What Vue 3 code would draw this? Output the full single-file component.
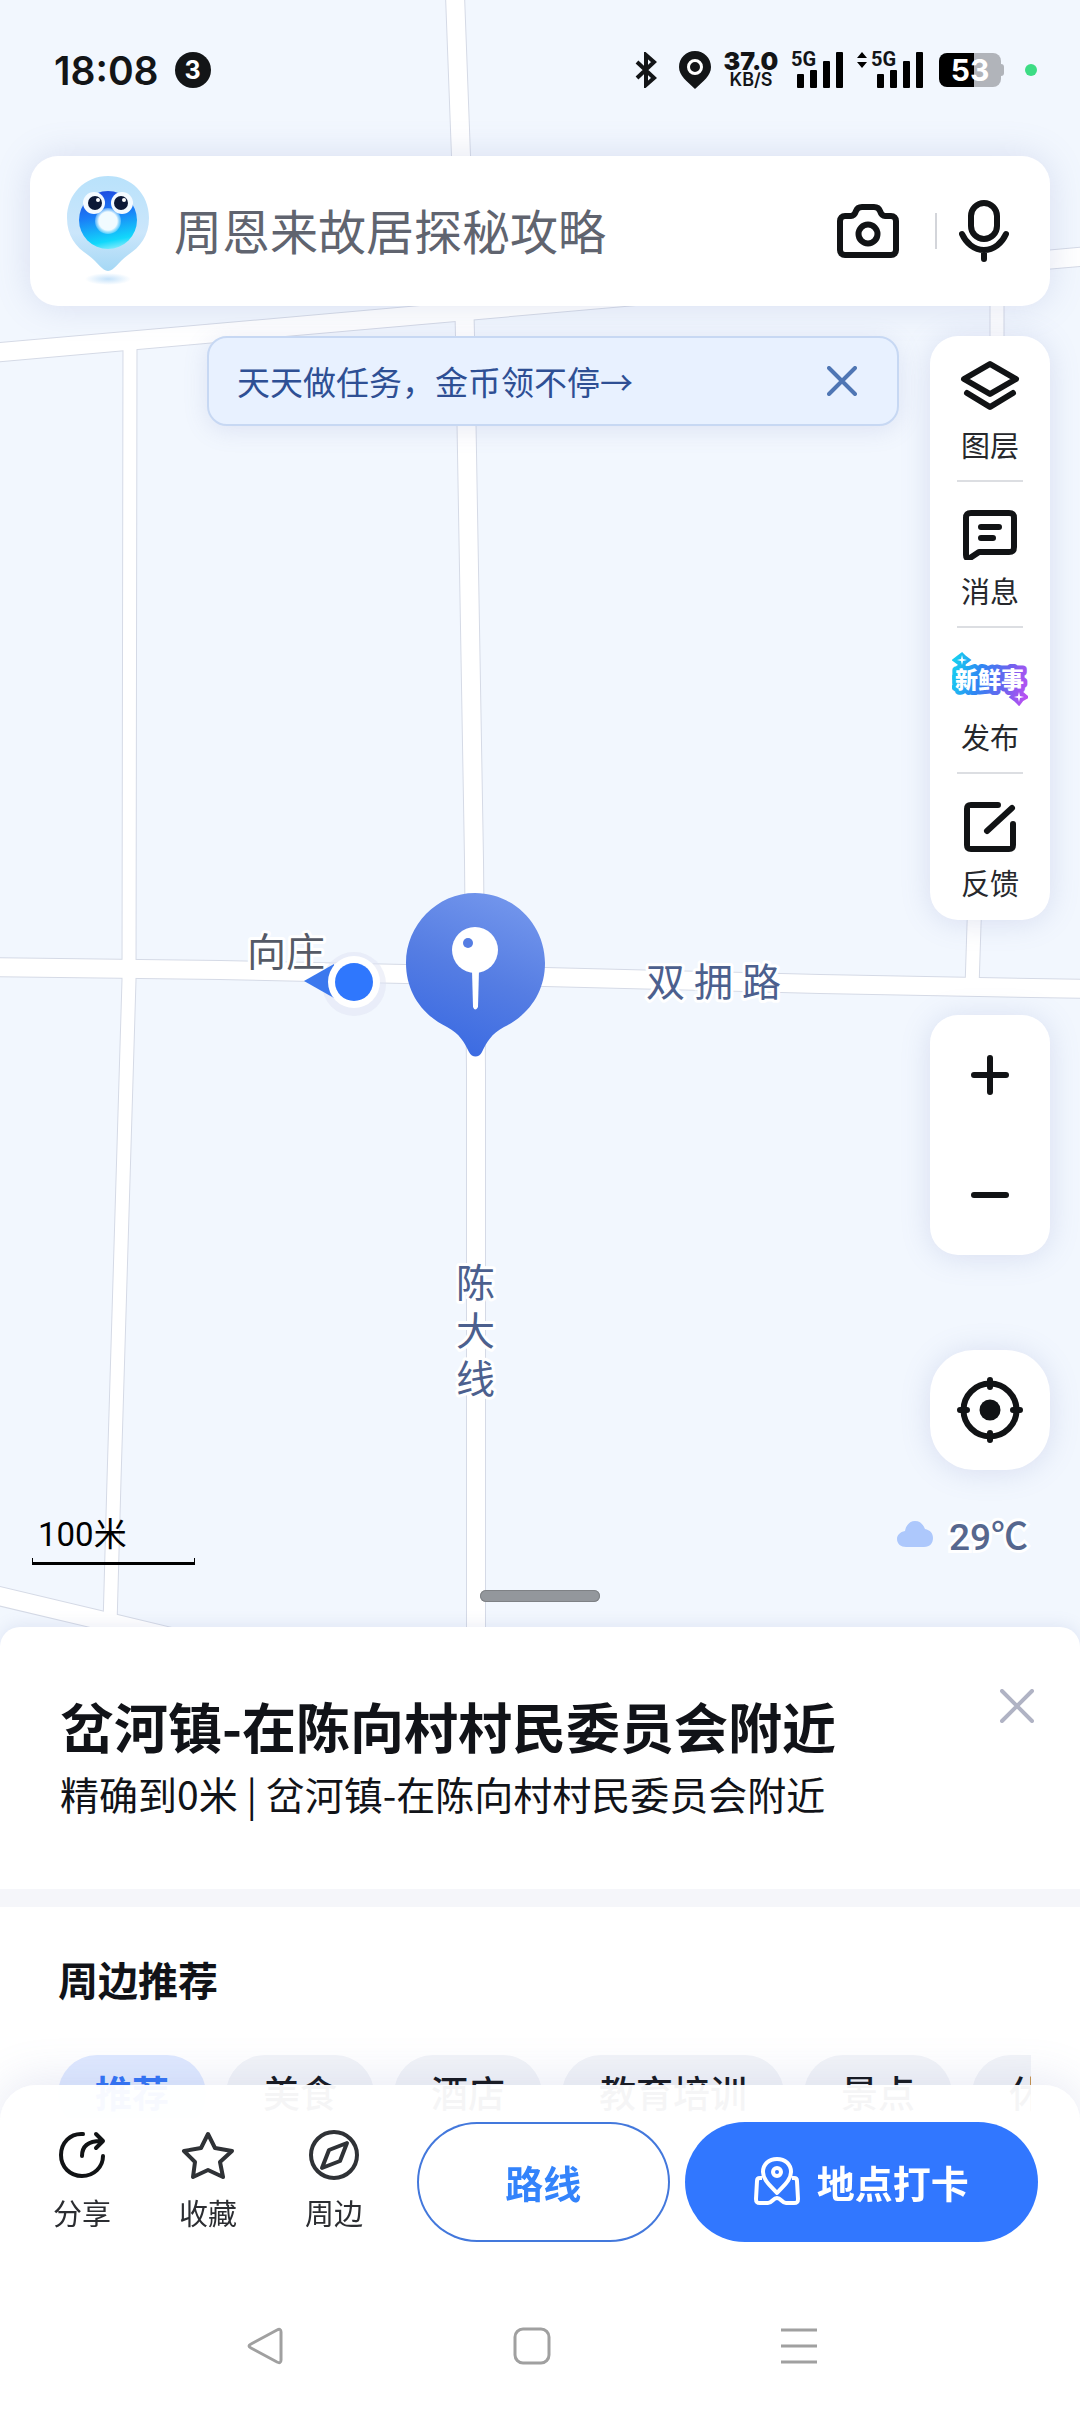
<script setup>
import { ref } from 'vue'

const keyword = ref('')
const showBanner = ref(true)
const activeTag = ref('推荐')
const tags = ['推荐', '美食', '酒店', '教育培训', '景点', '休闲']

const roads = [
  { d: 'M-10 353L1090 256', w: 18 },
  { d: 'M455 -5L461 156L465 336L474 860L476 1070V1650', w: 18 },
  { d: 'M-10 967L220 970L545 977L820 984L1090 989', w: 18 },
  { d: 'M130 340L129 980L114 1480L110 1625', w: 13 },
  { d: 'M-10 1594L104 1621L200 1644', w: 18 },
  { d: 'M997 262V336L974 925L972 988', w: 13 }
]

const bars = [14, 18, 27, 36]
</script>

<template>
  <div class="page">
    <section class="map">
      <svg class="map-canvas" viewBox="0 0 1080 1650" preserveAspectRatio="xMidYMin slice">
        <defs>
          <linearGradient id="pinFill" x1="0.7" y1="0" x2="0.35" y2="1">
            <stop offset="0" stop-color="#7396ec" />
            <stop offset="0.5" stop-color="#557de3" />
            <stop offset="1" stop-color="#3a6ae2" />
          </linearGradient>
        </defs>
        <path v-for="r in roads" :key="'c' + r.d" :d="r.d" class="road casing" :stroke-width="r.w + 2" />
        <path v-for="r in roads" :key="r.d" :d="r.d" class="road" :stroke-width="r.w" />

        <text class="place" x="247" y="966">向庄</text>
        <g class="road-name">
          <text x="646" y="996">双</text>
          <text x="694" y="996">拥</text>
          <text x="742" y="996">路</text>
          <text x="456" y="1297">陈</text>
          <text x="456" y="1345">大</text>
          <text x="456" y="1393">线</text>
        </g>

        <!-- current position -->
        <circle cx="354" cy="984" r="32" fill="#dfe4f4" opacity="0.5" />
        <path d="M304 981L334 964V998Z" fill="#3b78ee" />
        <circle cx="354" cy="982" r="26" fill="#fff" />
        <circle cx="354" cy="982" r="19" fill="#2f77fd" />

        <!-- selected point -->
        <path
          d="M475 893C514 893 545 925 545 963C545 992 529 1015 504 1027C491 1034 487 1042 482 1052C479 1058 472 1058 469 1052C464 1042 460 1034 447 1027C422 1015 406 992 406 963C406 925 437 893 475 893Z"
          fill="url(#pinFill)"
        />
        <circle cx="475" cy="950" r="23" fill="#fff" />
        <path d="M472 970H479L478 1007Q475 1012 473 1007Z" fill="#fff" />
        <circle cx="468" cy="943" r="5" fill="#557de3" />
      </svg>

      <header class="status-bar">
        <span class="time">18:08</span>
        <span class="notice">3</span>
        <div class="status-icons">
          <svg class="bluetooth" width="22" height="36" viewBox="0 0 22 36">
            <path d="M2 10L19 26L11 33V3L19 10L2 26" />
          </svg>
          <svg width="32" height="38" viewBox="0 0 32 38">
            <path d="M16 0C25 0 32 7 32 16C32 25 24 30 16 38C8 30 0 25 0 16C0 7 7 0 16 0Z" fill="#131517" />
            <circle cx="16" cy="16" r="6.5" fill="#131517" stroke="#fff" stroke-width="3" />
          </svg>
          <div class="net-speed"><b>37.0</b><span>KB/S</span></div>
          <div class="signal">
            <span class="net">5G</span>
            <svg width="46" height="36" viewBox="0 0 46 36">
              <rect v-for="(h, i) in bars" :key="h" :x="i * 13" :y="36 - h" width="7" :height="h" rx="1" />
            </svg>
          </div>
          <div class="signal second">
            <svg class="updown" width="12" height="16" viewBox="0 0 12 16">
              <path d="M1 6L6 0L11 6ZM1 10L6 16L11 10Z" />
            </svg>
            <span class="net">5G</span>
            <svg width="46" height="36" viewBox="0 0 46 36">
              <rect v-for="(h, i) in bars" :key="h" :x="i * 13" :y="36 - h" width="7" :height="h" rx="1" />
            </svg>
          </div>
          <div class="battery">53</div>
          <i class="dot"></i>
        </div>
      </header>

      <form class="search" @submit.prevent>
        <svg class="mascot" width="84" height="114" viewBox="0 0 84 114">
          <defs>
            <linearGradient id="mascotSkin" x1="0" y1="0" x2="0" y2="1">
              <stop offset="0" stop-color="#b9e2fb" />
              <stop offset="0.6" stop-color="#cbe6fb" />
              <stop offset="1" stop-color="#a5d8f5" />
            </linearGradient>
            <linearGradient id="mascotRing" x1="0.4" y1="0" x2="0.6" y2="1">
              <stop offset="0" stop-color="#1e4be0" />
              <stop offset="0.4" stop-color="#1a7df7" />
              <stop offset="0.85" stop-color="#12d8fb" />
              <stop offset="1" stop-color="#7febfb" />
            </linearGradient>
            <radialGradient id="mascotShade">
              <stop offset="0" stop-color="#c5e2fa" />
              <stop offset="1" stop-color="#fff" />
            </radialGradient>
            <radialGradient id="mascotMouth">
              <stop offset="0.7" stop-color="#f1fbff" />
              <stop offset="1" stop-color="#b5ebff" stop-opacity="0.4" />
            </radialGradient>
          </defs>
          <ellipse cx="42" cy="105" rx="23" ry="6" fill="url(#mascotShade)" />
          <path
            d="M42 2C65 2 83 20 83 44C83 62 74 73 62 81C52 88 48 97 42 97C36 97 32 88 22 81C10 73 1 62 1 44C1 20 19 2 42 2Z"
            fill="url(#mascotSkin)"
          />
          <circle cx="42" cy="46" r="29" fill="url(#mascotRing)" />
          <circle cx="42" cy="47" r="13" fill="url(#mascotMouth)" />
          <circle cx="28" cy="29" r="11" fill="#f4faff" />
          <circle cx="56" cy="29" r="11" fill="#f4faff" />
          <circle cx="29" cy="29" r="7" fill="#0c1836" />
          <circle cx="55" cy="29" r="7" fill="#0c1836" />
          <circle cx="32" cy="26" r="2" fill="#fff" />
          <circle cx="58" cy="26" r="2" fill="#fff" />
        </svg>
        <input v-model="keyword" type="text" aria-label="搜索" placeholder="周恩来故居探秘攻略" />
        <button type="button" class="icon-btn" aria-label="拍照">
          <svg class="line" width="62" height="62" viewBox="0 -1 62 62">
            <path
              d="M8 15H14C17 15 18 13 19 10C20 7 22 6 25 6H37C40 6 42 7 43 10C44 13 45 15 48 15H54C57 15 59 17 59 20V49C59 52 57 54 54 54H8C5 54 3 52 3 49V20C3 17 5 15 8 15Z"
            />
            <circle cx="31" cy="33" r="9.5" />
          </svg>
        </button>
        <i class="split"></i>
        <button type="button" class="icon-btn" aria-label="语音">
          <svg class="line" width="50" height="62" viewBox="0 0 50 62">
            <rect x="12" y="3" width="26" height="36" rx="13" />
            <path d="M3 34C7 43 15 50 25 50C35 50 43 43 47 34M25 50V59" />
          </svg>
        </button>
      </form>

      <div class="overlay">
        <div class="banner-slot">
          <div v-if="showBanner" class="banner">
            <a href="#">天天做任务，金币领不停→</a>
            <button class="icon-btn" aria-label="关闭" @click="showBanner = false">
              <svg width="30" height="30" viewBox="0 0 30 30" class="cross">
                <path d="M2 2L28 28M28 2L2 28" />
              </svg>
            </button>
          </div>
        </div>

        <div class="side">
          <div class="panel tools">
            <button>
              <svg class="line" width="76" height="56" viewBox="0 0 76 56">
                <path d="M38 6L64 21L38 36L12 21ZM15 35L38 49L61 35" />
              </svg>
              <span>图层</span>
            </button>
            <button>
              <svg class="line" width="76" height="56" viewBox="0 -2 76 56">
                <path d="M19 7H57C61 7 62 9 62 12V41C62 44 61 46 57 46H27L18 52C15 53 14 52 14 49V12C14 9 15 7 19 7ZM29 21H47M29 32H41" />
              </svg>
              <span>消息</span>
            </button>
            <button>
              <svg width="76" height="56" viewBox="0 -1 76 56">
                <defs>
                  <linearGradient id="freshEdge" gradientUnits="userSpaceOnUse" x1="0" y1="20" x2="76" y2="40">
                    <stop offset="0" stop-color="#17cdf0" />
                    <stop offset="0.35" stop-color="#2f86f3" />
                    <stop offset="0.7" stop-color="#6c63ee" />
                    <stop offset="1" stop-color="#bb50f2" />
                  </linearGradient>
                </defs>
                <path
                  d="M10 3L13 6L17 9L13 12L10 16L6 12L2 9L6 6ZM67 38L70 42L75 46L70 49L67 53L63 49L59 46L63 42Z"
                  fill="url(#freshEdge)"
                  stroke="url(#freshEdge)"
                  stroke-width="3"
                />
                <text class="fresh" x="3" y="37">新鲜事</text>
                <path
                  d="M10 4L11 8L15 9L11 10L10 14L9 10L5 9L9 8ZM67 41L68 45L72 46L68 47L67 51L66 47L62 46L66 45Z"
                  fill="#fff"
                />
              </svg>
              <span>发布</span>
            </button>
            <button>
              <svg class="line" width="76" height="56" viewBox="0 -2 76 56">
                <path d="M46 7H19C16 7 15 8 15 11V47C15 50 16 51 19 51H57C60 51 61 50 61 47V26M60 10L35 33" />
              </svg>
              <span>反馈</span>
            </button>
          </div>

          <div class="panel zoom">
            <button aria-label="放大">
              <svg class="line" width="44" height="44" viewBox="0 0 44 44"><path d="M6 22H38M22 5V39" /></svg>
            </button>
            <button aria-label="缩小">
              <svg class="line" width="44" height="44" viewBox="0 0 44 44"><path d="M6 22H38" /></svg>
            </button>
          </div>

          <button class="panel locate" aria-label="定位">
            <svg class="line" width="68" height="68" viewBox="0 0 68 68">
              <circle cx="34" cy="34" r="26.5" />
              <path d="M34 4V11M34 57V64M4 34H11M57 34H64" />
              <circle cx="34" cy="34" r="10.5" fill="#111315" stroke="none" />
            </svg>
          </button>
        </div>
      </div>

      <div class="map-foot">
        <div class="scale">100米</div>
        <div class="weather">
          <svg width="36" height="28" viewBox="0 0 36 28">
            <path d="M9 27C4 27 0 24 0 19C0 15 3 12 8 11C9 5 13 1 18 1C23 1 26 4 28 9C33 10 36 13 36 18C36 23 33 27 27 27Z" fill="#adc8fc" />
          </svg>
          <span>29℃</span>
        </div>
      </div>
      <div class="handle"></div>
    </section>

    <main class="sheet">
      <section class="poi">
        <div class="poi-text">
          <h1>岔河镇-在陈向村村民委员会附近</h1>
          <p>精确到0米 | 岔河镇-在陈向村村民委员会附近</p>
        </div>
        <button class="icon-btn" aria-label="关闭">
          <svg width="34" height="34" viewBox="0 0 34 34" class="cross grey">
            <path d="M2 2L32 32M32 2L2 32" />
          </svg>
        </button>
      </section>
      <section class="around">
        <h2>周边推荐</h2>
        <div class="tags">
          <button
            v-for="tag in tags"
            :key="tag"
            :class="{ active: tag === activeTag }"
            @click="activeTag = tag"
          >
            {{ tag }}
          </button>
        </div>
      </section>
    </main>

    <footer class="bottom">
      <div class="actions">
        <button class="action">
          <svg width="50" height="50" viewBox="0 0 50 50" class="thin dark">
            <path d="M26 4C13 3 4 13 4 25C4 37 13 46 25 46C37 46 46 37 46 26M25 26C25 16 31 11 44 11M39 4L46 11L39 18" />
          </svg>
          <span>分享</span>
        </button>
        <button class="action">
          <svg width="54" height="50" viewBox="0 0 54 50" class="thin">
            <path d="M27 4L34 18L51 21L39 32L42 47L27 40L12 47L14 32L3 21L20 18Z" />
          </svg>
          <span>收藏</span>
        </button>
        <button class="action">
          <svg width="50" height="50" viewBox="0 0 50 50" class="thin">
            <circle cx="25" cy="25" r="23" />
            <path d="M38 13L20 20L13 38L31 31Z" />
          </svg>
          <span>周边</span>
        </button>
        <div class="main-actions">
          <button class="btn btn-route">路线</button>
          <button class="btn btn-checkin">
            <svg width="46" height="48" viewBox="0 0 46 48">
              <path d="M23 36C17 29 9 23 9 15C9 7 15 2 23 2C31 2 37 7 37 15C37 23 29 29 23 36Z" />
              <circle cx="23" cy="15" r="4" />
              <path d="M8 21H6C4 21 3 22 3 24L2 42C2 45 3 46 6 46H14C18 46 19 41 23 41C27 41 28 46 32 46H40C43 46 44 45 44 42L43 24C43 22 42 21 40 21H38" />
            </svg>
            地点打卡
          </button>
        </div>
      </div>
      <nav class="sys-nav">
        <button aria-label="返回">
          <svg width="36" height="38" viewBox="0 0 36 38"><path d="M4 17L30 3Q34 1 34 5V33Q34 37 30 35L4 21Q0 19 4 17Z" /></svg>
        </button>
        <button aria-label="主页">
          <svg width="38" height="38" viewBox="0 0 38 38"><rect x="2" y="2" width="34" height="34" rx="8" /></svg>
        </button>
        <button aria-label="菜单">
          <svg width="36" height="38" viewBox="0 0 36 38"><path d="M0 3H36M0 19H36M0 35H36" /></svg>
        </button>
      </nav>
    </footer>
  </div>
</template>

<style>
body {
  background: #fff;
}
</style>

<style scoped>
.page {
  min-height: 100vh;
  display: flex;
  flex-direction: column;
  background: #f2f7fe;
  color: #111318;
  font-family: 'Noto Sans CJK SC', 'Noto Sans', sans-serif;
}

button {
  padding: 0;
  border: none;
  background: none;
  color: inherit;
  font-family: inherit;
}

svg {
  display: block;
  flex: none;
}

h1,
h2,
p {
  margin: 0;
}

/* map */
.map {
  position: relative;
  overflow: hidden;
}

.map-canvas {
  position: absolute;
  inset: 0;
  width: 100%;
  height: 100%;
}

.road {
  fill: none;
  stroke: #fff;
}

.casing {
  stroke: #d5dae6;
}

.map-canvas text {
  font-size: 39px;
  stroke: #fff;
  stroke-width: 6px;
  stroke-linejoin: round;
  paint-order: stroke;
}

.place {
  fill: #555a66;
}

.road-name {
  fill: #4c608e;
}

/* status bar */
.status-bar {
  position: relative;
  display: flex;
  align-items: center;
  height: 140px;
  padding: 0 43px 0 54px;
  font-family: Inter, sans-serif;
  color: #131517;
}

.time {
  font-size: 39px;
  font-weight: 600;
}

.notice {
  width: 36px;
  height: 36px;
  margin-left: 16px;
  border-radius: 50%;
  background: #131517;
  color: #fff;
  font-size: 25px;
  font-weight: 700;
  line-height: 36px;
  text-align: center;
}

.status-icons {
  display: flex;
  align-items: center;
  margin-left: auto;
}

.bluetooth {
  margin-right: 22px;
  fill: none;
  stroke: #131517;
  stroke-width: 4;
}

.net-speed {
  display: flex;
  flex-direction: column;
  align-items: center;
  width: 56px;
  margin: 0 12px 0 12px;
  font-size: 18px;
  font-weight: 600;
  line-height: 18px;
}

.net-speed b {
  font-size: 25px;
  line-height: 20px;
}

.signal {
  position: relative;
  padding-left: 6px;
  margin-right: 16px;
}

.signal.second {
  padding-left: 18px;
}

.net {
  position: absolute;
  top: -2px;
  left: 0;
  font-family: Roboto, sans-serif;
  font-size: 20px;
  font-weight: 700;
  line-height: 18px;
}

.second .net {
  left: 12px;
}

.updown {
  position: absolute;
  top: 0;
  left: -3px;
}

.battery {
  width: 62px;
  height: 34px;
  border-radius: 8px;
  background: linear-gradient(90deg, #000 56%, #b1b4ba 56%);
  color: #fff;
  font-size: 30px;
  font-weight: 700;
  line-height: 34px;
  text-align: center;
}

.battery::after {
  content: '';
  position: absolute;
  width: 3px;
  height: 12px;
  margin: 11px 0 0 12px;
  border-radius: 0 3px 3px 0;
  background: #b1b4ba;
}

.dot {
  width: 12px;
  height: 12px;
  margin-left: 24px;
  border-radius: 50%;
  background: #3ddc84;
}

/* search */
.search {
  position: relative;
  display: flex;
  align-items: center;
  height: 150px;
  margin: 16px 30px 0;
  padding: 0 41px 0 36px;
  box-sizing: border-box;
  border-radius: 28px;
  background: #fff;
  box-shadow: 0 0 36px rgba(110, 125, 185, 0.2);
}

.search input {
  flex: 1;
  min-width: 0;
  height: 72px;
  margin-left: 24px;
  padding: 0 0 4px;
  border: none;
  outline: none;
  background: none;
  color: #111318;
  font-family: inherit;
  font-size: 48px;
}

.search input::placeholder {
  color: #60646f;
  opacity: 1;
}

.split {
  width: 2px;
  height: 36px;
  margin: 0 22px 0 36px;
  background: #d3d5da;
}

.line {
  fill: none;
  stroke: #111315;
  stroke-width: 6;
  stroke-linecap: round;
  stroke-linejoin: round;
}

/* banner and side buttons */
.overlay {
  position: relative;
  display: flex;
  gap: 31px;
  padding: 30px 30px 0;
}

.banner-slot {
  flex: 1;
  padding-left: 177px;
}

.banner {
  display: flex;
  align-items: center;
  justify-content: space-between;
  height: 90px;
  padding: 0 40px 0 28px;
  box-sizing: border-box;
  border: 2px solid #c7d8f3;
  border-radius: 20px;
  background: #e8f1ff;
  box-shadow: 0 4px 24px rgba(110, 125, 185, 0.16);
}

.banner a {
  color: #2e4f94;
  font-size: 33px;
  text-decoration: none;
}

.cross {
  fill: none;
  stroke: #4f76b4;
  stroke-width: 4;
  stroke-linecap: round;
}

.cross.grey {
  stroke: #b0b3c4;
}

.side {
  display: flex;
  flex-direction: column;
  gap: 95px;
  width: 120px;
}

.panel {
  display: flex;
  flex-direction: column;
  align-items: center;
  border-radius: 28px;
  background: #fff;
  box-shadow: 0 2px 30px rgba(110, 125, 185, 0.2);
}

.tools button {
  display: flex;
  flex-direction: column;
  align-items: center;
  gap: 10px;
  padding: 22px 0 18px;
  font-size: 29px;
  line-height: 40px;
  color: #26282c;
}

.tools button + button::before {
  content: '';
  width: 66px;
  height: 2px;
  margin: -24px 0 12px;
  background: #dcdee2;
}

.fresh {
  fill: #fff;
  stroke: url(#freshEdge);
  stroke-width: 8px;
  stroke-linejoin: round;
  paint-order: stroke;
  font-size: 23px;
  font-weight: 900;
}

.zoom button {
  display: flex;
  align-items: center;
  justify-content: center;
  width: 100%;
  height: 120px;
}

.locate {
  justify-content: center;
  height: 120px;
  border-radius: 44px;
}

.map-foot {
  position: relative;
  display: flex;
  justify-content: space-between;
  height: 50px;
  margin-top: 44px;
  padding: 0 52px 0 32px;
}

.scale {
  width: 155px;
  padding-left: 6px;
  font-size: 33px;
  line-height: 42px;
  font-family: Roboto, 'Noto Sans CJK SC', sans-serif;
  color: #000;
}

.scale::after {
  content: '';
  display: block;
  height: 4px;
  margin: 2px -2px 0 -6px;
  border: 1px solid #000;
  border-top: none;
  border-bottom-width: 3px;
  box-sizing: content-box;
}

.weather {
  display: flex;
  align-items: center;
  gap: 16px;
  height: 40px;
  color: #56678e;
  font-size: 37px;
  font-weight: 500;
  font-family: Roboto, 'Noto Sans CJK SC', sans-serif;
}

.weather span {
  -webkit-text-stroke: 6px #fff;
  paint-order: stroke;
}

.handle {
  position: relative;
  width: 120px;
  height: 12px;
  margin: 26px auto 25px;
  border-radius: 6px;
  background: #93979c;
  box-shadow: inset 0 0 0 1px #7e8185;
}

/* sheet */
.sheet {
  position: relative;
  flex: 1;
  padding-bottom: 240px;
  border-radius: 20px 20px 0 0;
  background: #fff;
  box-shadow: 0 -2px 16px rgba(110, 125, 185, 0.14);
}

.poi {
  display: flex;
  align-items: flex-start;
  justify-content: space-between;
  padding: 62px 46px 72px 60px;
  border-bottom: 18px solid #f5f6fa;
}

.poi-text {
  padding-top: 5px;
}

h1 {
  font-size: 54px;
  line-height: 64px;
  font-weight: 700;
}

.poi p {
  margin-top: 11px;
  font-size: 39px;
  line-height: 48px;
}

.around {
  padding: 44px 49px 0 58px;
}

h2 {
  font-size: 40px;
  line-height: 56px;
}

.tags {
  display: flex;
  gap: 20px;
  margin-top: 48px;
  overflow: hidden;
}

.tags button {
  flex: none;
  height: 78px;
  padding: 0 37px 4px;
  border-radius: 39px;
  background: #f2f4f8;
  font-size: 37px;
  font-weight: 500;
}

.tags .active {
  background: #dfe9ff;
  color: #3072f6;
  font-weight: 700;
}

/* bottom bar */
.bottom {
  position: fixed;
  right: 0;
  bottom: 0;
  left: 0;
  padding: 37px 0 22px;
  border-radius: 36px 36px 0 0;
  background: linear-gradient(rgba(255, 255, 255, 0.96) 26px, #fff 46px);
  box-shadow: 0 -6px 44px rgba(110, 125, 185, 0.16);
}

.actions {
  display: flex;
  align-items: flex-start;
  gap: 68px;
  padding: 0 42px 0 53px;
}

.action {
  display: flex;
  flex-direction: column;
  align-items: center;
  gap: 12px;
  width: 58px;
  padding-top: 8px;
  font-size: 29px;
  line-height: 40px;
  color: #2b2d31;
}

.thin {
  fill: none;
  stroke: #2f3236;
  stroke-width: 4;
  stroke-linecap: round;
  stroke-linejoin: round;
}

.thin.dark {
  stroke: #111315;
}

.main-actions {
  flex: 1;
  display: flex;
  gap: 15px;
  margin-left: -14px;
}

.btn {
  display: flex;
  align-items: center;
  justify-content: center;
  gap: 17px;
  height: 120px;
  padding-bottom: 2px;
  border-radius: 60px;
  box-sizing: border-box;
  font-size: 38px;
  font-weight: 700;
}

.btn svg {
  fill: none;
  stroke: #fff;
  stroke-width: 4;
  stroke-linejoin: round;
}

.btn-route {
  flex: 5 1 0;
  box-shadow: inset 0 0 0 2px #4378dc;
  color: #3383fb;
}

.btn-checkin {
  flex: 7 1 0;
  background: #3177ff;
  color: #fff;
}

.sys-nav {
  display: flex;
  justify-content: space-between;
  margin-top: 60px;
  padding: 0 263px 0 247px;
}

.sys-nav button {
  display: flex;
  align-items: center;
  height: 88px;
}

.sys-nav svg {
  fill: none;
  stroke: #a0a0a0;
  stroke-width: 3;
}
</style>
